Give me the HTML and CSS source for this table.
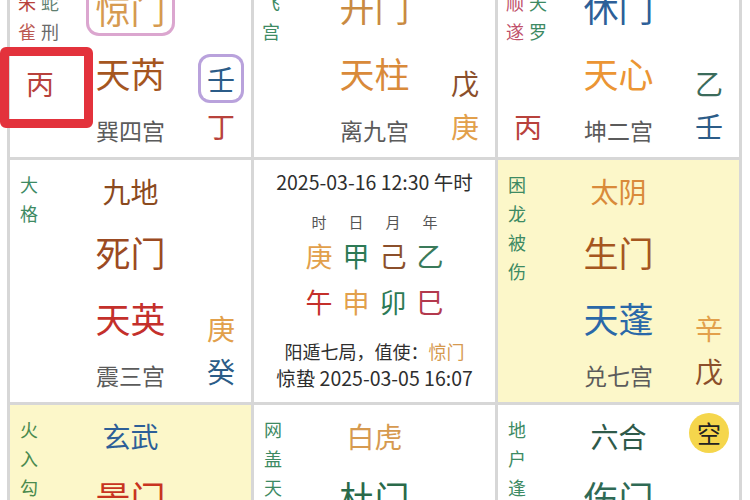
FILE: index.html
```html
<!DOCTYPE html>
<html lang="zh-CN">
<head>
<meta charset="utf-8">
<title>奇门盘</title>
<link rel="stylesheet" href="styles.css">
</head>
<body>
<div class="board">
  <!-- 巽四宫 -->
  <div class="cell">
    <div class="patterns top">
      <div class="pcol"><span class="c-red">朱</span><span class="c-red2">雀</span></div>
      <div class="pcol"><span class="c-sage">蛇</span><span class="c-gray">刑</span></div>
    </div>
    <div class="main">
      <div class="deity"></div>
      <div class="door"><span class="boxed-door c-tan">惊门</span></div>
      <div class="star c-brown">天芮</div>
      <div class="palace">巽四宫</div>
    </div>
    <div class="stems left">
      <div class="stem marked c-red">丙<span class="mark"></span></div>
      <div class="stem"></div>
    </div>
    <div class="stems right">
      <div class="stem"><span class="boxed-stem c-blue">壬</span></div>
      <div class="stem c-red">丁</div>
    </div>
  </div>

  <!-- 离九宫 -->
  <div class="cell">
    <div class="patterns top">
      <div class="pcol c-green"><span>飞</span><span>宫</span></div>
    </div>
    <div class="main">
      <div class="deity"></div>
      <div class="door c-amber">开门</div>
      <div class="star c-orange">天柱</div>
      <div class="palace">离九宫</div>
    </div>
    <div class="stems right">
      <div class="stem c-dbrown">戊</div>
      <div class="stem c-gold">庚</div>
    </div>
  </div>

  <!-- 坤二宫 -->
  <div class="cell">
    <div class="patterns top">
      <div class="pcol c-rose"><span>顺</span><span>遂</span></div>
      <div class="pcol c-green"><span>天</span><span>罗</span></div>
    </div>
    <div class="main">
      <div class="deity"></div>
      <div class="door c-navy">休门</div>
      <div class="star c-bright">天心</div>
      <div class="palace">坤二宫</div>
    </div>
    <div class="stems left">
      <div class="stem"></div>
      <div class="stem c-red">丙</div>
    </div>
    <div class="stems right">
      <div class="stem c-teal">乙</div>
      <div class="stem c-blue">壬</div>
    </div>
  </div>

  <!-- 震三宫 -->
  <div class="cell">
    <div class="patterns">
      <div class="pcol c-green"><span>大</span><span>格</span></div>
    </div>
    <div class="main">
      <div class="deity c-brown2">九地</div>
      <div class="door c-rust">死门</div>
      <div class="star c-crimson">天英</div>
      <div class="palace">震三宫</div>
    </div>
    <div class="stems right">
      <div class="stem c-gold">庚</div>
      <div class="stem c-blue">癸</div>
    </div>
  </div>

  <!-- 中宫信息 -->
  <div class="cell info">
    <div class="line date">2025-03-16 12:30 午时</div>
    <div class="gz labels"><span>时</span><span>日</span><span>月</span><span>年</span></div>
    <div class="gz stems-row">
      <span class="c-gold">庚</span><span class="c-jade">甲</span><span class="c-dbrown">己</span><span class="c-teal2">乙</span>
    </div>
    <div class="gz branches">
      <span class="c-crimson">午</span><span class="c-gold">申</span><span class="c-jade">卯</span><span class="c-plum">巳</span>
    </div>
    <div class="line ju">阳遁七局，值使：<span class="c-tan">惊门</span></div>
    <div class="line term">惊蛰 2025-03-05 16:07</div>
  </div>

  <!-- 兑七宫 -->
  <div class="cell yellow">
    <div class="patterns">
      <div class="pcol c-green"><span>困</span><span>龙</span><span>被</span><span>伤</span></div>
    </div>
    <div class="main">
      <div class="deity c-orange">太阴</div>
      <div class="door c-brown">生门</div>
      <div class="star c-sky">天蓬</div>
      <div class="palace">兑七宫</div>
    </div>
    <div class="stems right">
      <div class="stem c-gold">辛</div>
      <div class="stem c-dbrown">戊</div>
    </div>
  </div>

  <!-- 艮八宫 -->
  <div class="cell yellow">
    <div class="patterns">
      <div class="pcol c-leaf"><span>火</span><span>入</span><span>勾</span></div>
    </div>
    <div class="main">
      <div class="deity c-navy">玄武</div>
      <div class="door c-scarlet">景门</div>
    </div>
  </div>

  <!-- 坎一宫 -->
  <div class="cell">
    <div class="patterns">
      <div class="pcol c-green"><span>网</span><span>盖</span><span>天</span></div>
    </div>
    <div class="main">
      <div class="deity c-tan">白虎</div>
      <div class="door c-forest">杜门</div>
    </div>
  </div>

  <!-- 乾六宫 -->
  <div class="cell">
    <div class="patterns">
      <div class="pcol c-green"><span>地</span><span>户</span><span>逢</span></div>
    </div>
    <div class="main">
      <div class="deity c-pine">六合</div>
      <div class="door c-pine2">伤门</div>
    </div>
    <div class="badge">空</div>
  </div>
</div>
</body>
</html>
```

FILE: styles.css
```css
html, body {
  margin: 0;
  padding: 0;
  overflow: hidden;
  background: #ffffff;
}

body {
  font-family: "Noto Sans CJK SC", "Noto Sans", sans-serif;
  color: #333333;
}

.board {
  display: grid;
  grid-template-columns: repeat(3, 241px);
  grid-auto-rows: 242px;
  gap: 3px;
  padding: 3px;
  background: #d7d7d7;
  margin: -88px 0 0 7px;
  width: max-content;
}

.cell {
  background: #ffffff;
  display: grid;
  grid-template-columns: 60px 1fr 60px;
  grid-template-rows: 146px 96px;
  min-width: 0;
}

.cell.yellow {
  background: #fcf7c9;
}

/* pattern (格局) vertical text */
.patterns {
  grid-column: 1;
  grid-row: 1;
  display: flex;
  gap: 5px;
  padding: 10px 0 0 10px;
  font-size: 18px;
  line-height: 29px;
}

.patterns.top {
  padding-top: 73px;
  padding-left: 8px;
}

.pcol {
  display: flex;
  flex-direction: column;
}

/* centre column */
.main {
  grid-column: 2;
  grid-row: 1 / span 2;
  display: flex;
  flex-direction: column;
  align-items: center;
}

.deity,
.door,
.star,
.palace {
  display: flex;
  align-items: center;
  justify-content: center;
  line-height: 1;
  white-space: nowrap;
}

.deity { height: 62px; font-size: 28px; }
.door { height: 58px; font-size: 35px; }
.star { height: 74px; font-size: 35px; }
.palace { height: 42px; font-size: 23px; color: #5b5b5b; }

.boxed-door {
  display: inline-block;
  padding: 7px 6px;
  margin-top: 5px;
  border-radius: 10px;
  box-shadow: 0 0 0 3px #dba6cf;
}

/* stems */
.stems {
  grid-row: 2;
}

.stems.left { grid-column: 1; }
.stems.right { grid-column: 3; }

.stem {
  height: 43px;
  display: flex;
  align-items: center;
  justify-content: center;
  font-size: 28px;
  line-height: 1;
}

.stem.marked {
  position: relative;
}

.mark {
  position: absolute;
  left: -10px;
  top: -14px;
  width: 93px;
  height: 81px;
  box-sizing: border-box;
  border: 9px solid #e3323c;
  border-radius: 6px;
}

.boxed-stem {
  display: flex;
  align-items: center;
  justify-content: center;
  width: 40px;
  height: 43px;
  margin-bottom: 8px;
  border-radius: 9px;
  box-shadow: 0 0 0 3px #b9a2dc;
}

.badge {
  grid-column: 3;
  grid-row: 1;
  justify-self: center;
  align-self: start;
  margin-top: 8px;
  width: 40px;
  height: 40px;
  border-radius: 50%;
  background: #f5d64c;
  color: #222222;
  font-size: 24px;
  line-height: 40px;
  text-align: center;
}

/* centre info panel */
.cell.info {
  display: flex;
  flex-direction: column;
  align-items: center;
  padding-top: 9px;
  box-sizing: border-box;
}

.line {
  line-height: 26px;
  white-space: nowrap;
  color: #2e2e2e;
}

.line.date { font-size: 19.5px; }
.line.ju { font-size: 18px; margin-top: 23px; }
.line.term { font-size: 19.5px; margin-top: 1px; }

.gz {
  display: grid;
  grid-template-columns: repeat(4, 37px);
  justify-items: center;
  line-height: 26px;
}

.gz.labels {
  font-size: 15px;
  color: #555555;
  margin-top: 14px;
}

.gz.stems-row {
  font-size: 27px;
  margin-top: 8px;
}

.gz.branches {
  font-size: 27px;
  margin-top: 20px;
}

/* colours */
.c-red { color: #b8423c; }
.c-red2 { color: #bb5a52; }
.c-sage { color: #5f7f70; }
.c-gray { color: #6a6a6a; }
.c-green { color: #3d8a63; }
.c-leaf { color: #4a8a4e; }
.c-rose { color: #c0506a; }
.c-tan { color: #d69a50; }
.c-brown { color: #a5561f; }
.c-brown2 { color: #8b4a1e; }
.c-blue { color: #2b5c88; }
.c-amber { color: #c98a42; }
.c-orange { color: #d98a3a; }
.c-dbrown { color: #8b4f2b; }
.c-gold { color: #e2a04b; }
.c-navy { color: #2d5f98; }
.c-bright { color: #eb9534; }
.c-teal { color: #3b6b5b; }
.c-teal2 { color: #3a7a5a; }
.c-rust { color: #9b4a22; }
.c-crimson { color: #c4302b; }
.c-sky { color: #2a68a8; }
.c-scarlet { color: #c8341f; }
.c-forest { color: #2a6a4a; }
.c-pine { color: #2f5a4a; }
.c-pine2 { color: #2f6a55; }
.c-jade { color: #2d7a55; }
.c-plum { color: #b3394d; }
```
